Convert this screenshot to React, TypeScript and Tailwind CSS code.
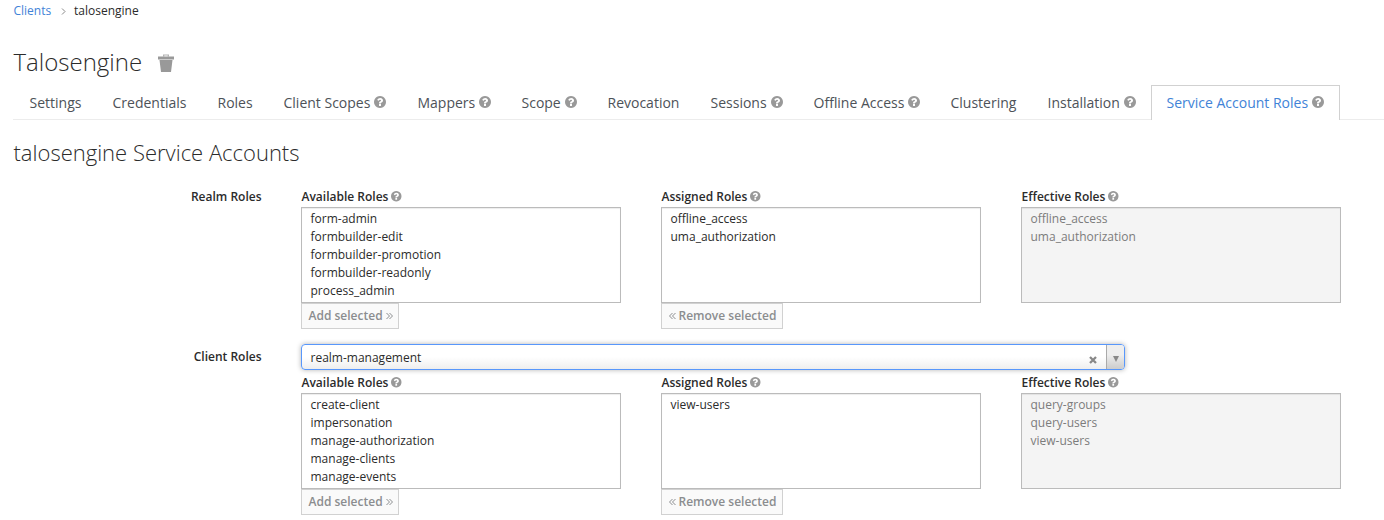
import React from 'react';

function Help({ className }: { className: string }) {
  return (
    <svg viewBox="0 0 1536 1536" className={`shrink-0 fill-[#999] ${className}`}>
      <path d="M896 1248v-192q0-14-9-23t-23-9H672q-14 0-23 9t-9 23v192q0 14 9 23t23 9h192q14 0 23-9t9-23zm256-672q0-88-55.500-163t-138.500-116-170-41q-243 0-371 213-15 24 8 42l132 100q7 6 19 6 16 0 25-12 53-68 86-92 34-24 86-24 48 0 85.500 26t37.500 59q0 38-20 61t-68 45q-63 28-115.500 86.500T640 892v36q0 14 9 23t23 9h192q14 0 23-9t9-23q0-19 21.500-49.500T972 829q32-18 49-28.500t46-35 44.500-48 28-60.500 12.500-81zm384 192q0 209-103 385.500T1153.500 1433 768 1536t-385.500-103T103 1153.500 0 768t103-385.500T382.500 103 768 0t385.500 103T1433 382.500 1536 768z" />
    </svg>
  );
}

const tabs = [
  { title: 'Settings', width: 'w-[83px]', help: false },
  { title: 'Credentials', width: 'w-[105px]', help: false },
  { title: 'Roles', width: 'w-[66px]', help: false },
  { title: 'Client Scopes', width: 'w-[134px]', help: true },
  { title: 'Mappers', width: 'w-[104px]', help: true },
  { title: 'Scope', width: 'w-[86px]', help: true },
  { title: 'Revocation', width: 'w-[103px]', help: false },
  { title: 'Sessions', width: 'w-[103px]', help: true },
  { title: 'Offline Access', width: 'w-[137px]', help: true },
  { title: 'Clustering', width: 'w-[97px]', help: false },
  { title: 'Installation', width: 'w-[103.5px]', help: true },
];

function DoubleAngle({ left }: { left?: boolean }) {
  return (
    <svg viewBox="0 0 7 8" className={`mt-px h-2 w-[7px] fill-none stroke-[#8b8d8f] ${left ? 'rotate-180' : ''}`}>
      <path d="M.5 1l3 3-3 3M3.500 1l3 3-3 3" strokeWidth="1" />
    </svg>
  );
}

type ColumnProps = { title: string; items: string[]; action?: 'add' | 'remove'; disabled?: boolean };

function Column({ title, items, action, disabled }: ColumnProps) {
  return (
    <div className="w-[320px] shrink-0">
      <div className="flex h-5 items-center gap-[3px] pb-px pl-[0.5px] font-semibold">
        {title}
        <Help className="size-[10.5px]" />
      </div>
      <div
        className={`h-24 border border-[#bbb] pt-0.5 pl-[8.5px] shadow-[inset_0_1px_1px_rgba(3,3,3,0.075)] ${
          disabled ? 'bg-[#f4f4f4] text-[#7c7c7c]' : 'bg-white'
        }`}
      >
        {items.map((item) => (
          <div key={item} className="h-[18px] leading-[18px]">{item}</div>
        ))}
      </div>
      {action && (
        <button className="flex h-[26px] items-center gap-[3px] border border-[#d1d1d1] bg-[#fafafa] pr-[5.5px] pb-px pl-[6.5px] font-semibold text-[#8b8d8f]">
          {action === 'remove' && <DoubleAngle left />}
          {action === 'add' ? 'Add selected' : 'Remove selected'}
          {action === 'add' && <DoubleAngle />}
        </button>
      )}
    </div>
  );
}

export default function App() {
  return (
    <div className="h-[520px] overflow-hidden bg-white pl-[13px] font-['Open_Sans',sans-serif] text-[12px] text-[#2b2b2b]">
      <nav className="flex h-[22px] items-center pl-[0.5px]">
        <a className="w-[47.5px] text-[#4183d7]">Clients</a>
        <svg viewBox="0 0 5 7" className="mt-px mr-2 h-[7px] w-[5px] fill-none stroke-[#888]">
          <path d="M1 .5l3 3-3 3" />
        </svg>
        <span>talosengine</span>
      </nav>
      <h1 className="mt-[23px] flex h-[34px] items-center gap-4 pl-[0.5px] text-[24px] font-light">
        <span className="w-[128.5px]">Talosengine</span>
        <svg viewBox="0 0 16 18" className="mt-px h-[18px] w-4 fill-[#999]">
          <path d="M0 2.500h16v3H0zM1.500 6h13l-1.500 12H3z" />
          <path d="M5 2.500v-2h6v2H9.700V1.600H6.300v.9z" opacity=".75" />
        </svg>
      </h1>
      <div className="mt-1.5 flex h-[35px] text-[14px] text-[#4d5258]">
        <div className="w-[16.5px] shrink-0 border-b border-[#ececec]" />
        {tabs.map((tab) => (
          <div key={tab.title} className={`flex shrink-0 items-center gap-1 border-b border-[#ececec] whitespace-nowrap ${tab.width}`}>
            {tab.title}
            {tab.help && <Help className="size-3" />}
          </div>
        ))}
        <div className="flex w-[189px] shrink-0 items-center gap-[3.5px] border border-b-0 border-[#d1d1d1] pb-0.5 pl-[14.5px] text-[#4183d7]">
          Service Account Roles
          <Help className="size-3" />
        </div>
        <div className="flex-1 border-b border-[#ececec]" />
      </div>
      <h2 className="mt-[17px] flex h-[30px] items-center pl-[0.5px] text-[22px] font-light">talosengine Service Accounts</h2>
      <section className="mt-5 flex h-[157px]">
        <div className="mr-[39.5px] flex h-5 w-[248.5px] items-center justify-end pb-px font-semibold">Realm Roles</div>
        <div className="flex gap-10">
          <Column title="Available Roles" items={['form-admin', 'formbuilder-edit', 'formbuilder-promotion', 'formbuilder-readonly', 'process_admin']} action="add" />
          <Column title="Assigned Roles" items={['offline_access', 'uma_authorization']} action="remove" />
          <Column title="Effective Roles" items={['offline_access', 'uma_authorization']} disabled />
        </div>
      </section>
      <section className="flex">
        <div className="mr-[39.5px] flex h-[26px] w-[248.5px] items-center justify-end font-semibold">Client Roles</div>
        <div>
          <div className="flex h-[26px] w-[824px] overflow-hidden rounded border border-[#5897fb] bg-linear-to-b from-white from-50% to-[#eee] shadow-[0_0_5px_rgba(0,0,0,0.3)]">
            <div className="flex-1 pt-px pl-[8.5px] leading-6">realm-management</div>
            <svg viewBox="0 0 8 8" className="mt-[11px] mr-[9px] size-2 fill-none stroke-[#888]">
              <path d="M1 1l6 6M7 1L1 7" strokeWidth="2.300" />
            </svg>
            <div className="flex w-[18px] justify-center border-l border-[#aaa] bg-linear-to-b from-[#eee] from-40% to-[#ccc] pt-[11px]">
              <svg viewBox="0 0 6 6" className="size-1.5 fill-[#888]"><path d="M0 0h6L3 6z" /></svg>
            </div>
          </div>
          <div className="mt-[3px] flex gap-10">
            <Column title="Available Roles" items={['create-client', 'impersonation', 'manage-authorization', 'manage-clients', 'manage-events']} action="add" />
            <Column title="Assigned Roles" items={['view-users']} action="remove" />
            <Column title="Effective Roles" items={['query-groups', 'query-users', 'view-users']} disabled />
          </div>
        </div>
      </section>
    </div>
  );
}
